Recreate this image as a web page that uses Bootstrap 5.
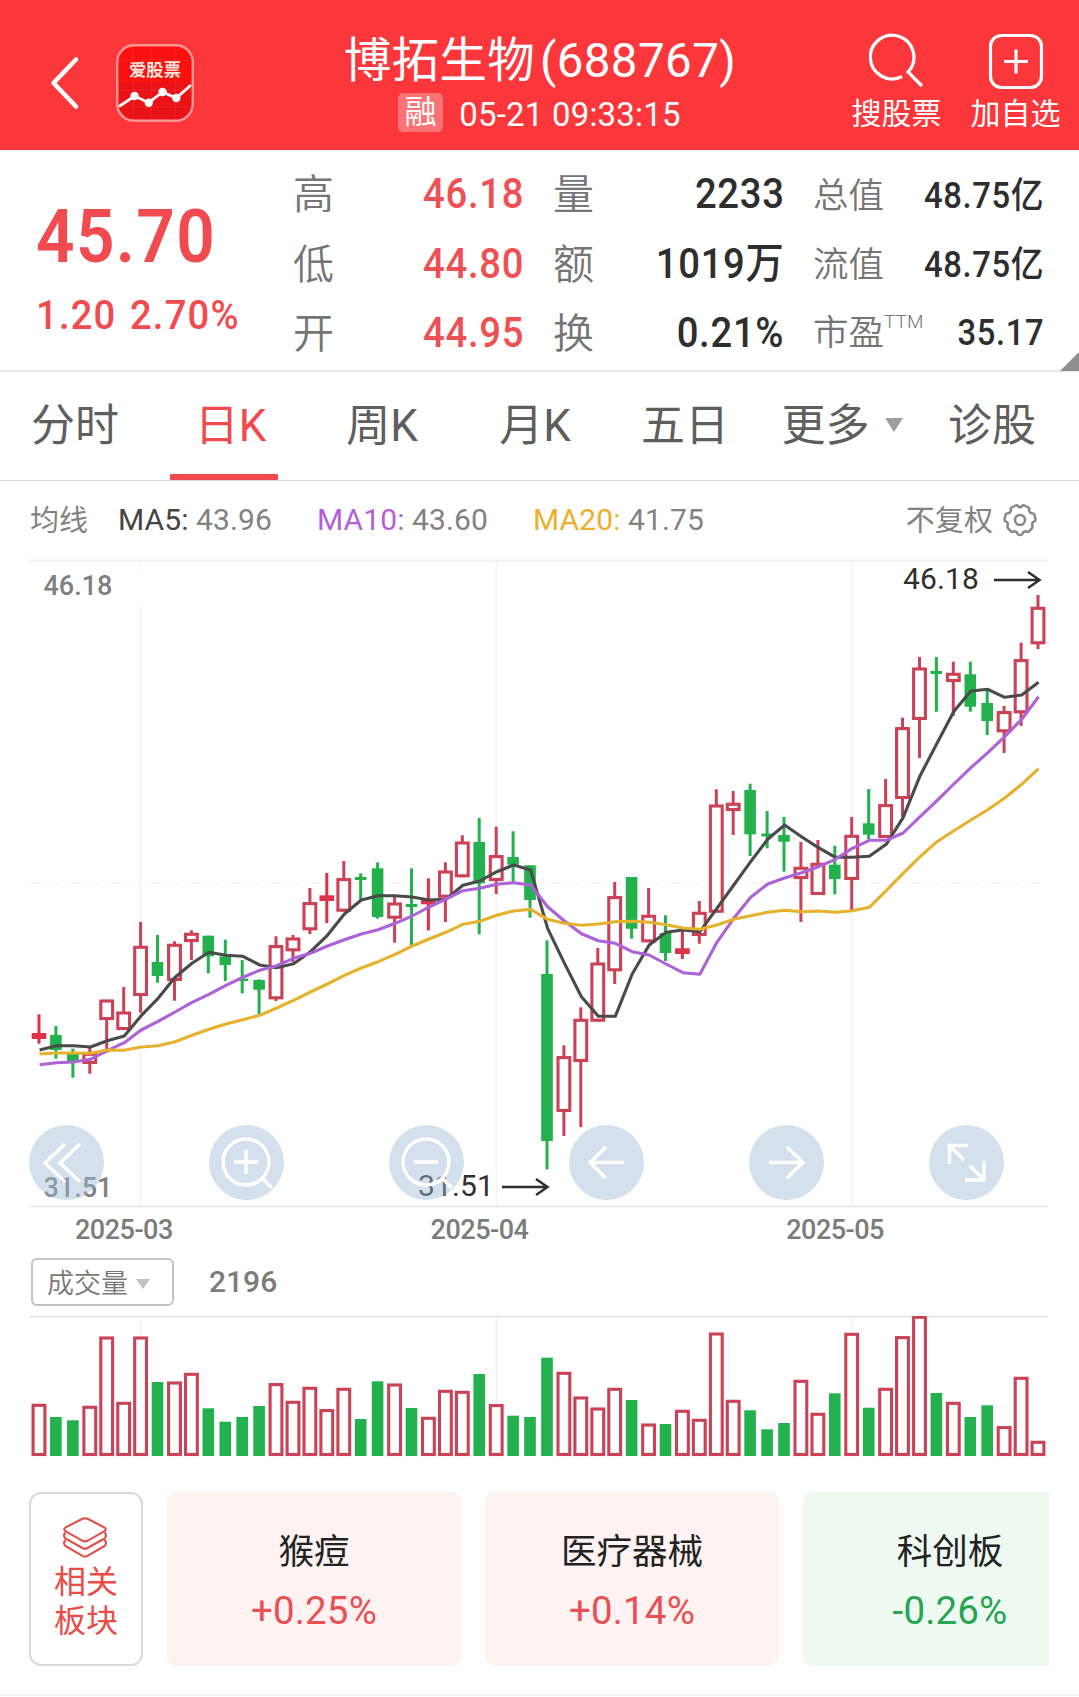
<!DOCTYPE html>
<html lang="zh-CN">
<head>
<meta charset="utf-8">
<meta name="viewport" content="width=device-width, initial-scale=1">
<title>博拓生物(688767)</title>
<link href="https://cdn.jsdelivr.net/npm/bootstrap@5.3.0/dist/css/bootstrap.min.css" rel="stylesheet">
<style>
  body { font-family: Roboto, "Noto Sans CJK SC", sans-serif; color: #2e2e2e; background: #fff; width: 1079px; overflow-x: hidden; }
  svg { display: block; }
  .app-bar { height: 150px; background: #fb373c; color: #fff; }
  .bar-left { width: 330px; padding-left: 49px; }
  .app-logo { margin-left: 36px; margin-top: 15px; }
  .back-icon { margin-top: 15px; }
  .bar-title { width: 420px; }
  .stock-name { font-size: 47.5px; line-height: 60px; margin-top: 31px; letter-spacing: .3px; white-space: nowrap; }
  .stock-code { letter-spacing: .4px; margin-left: 5px; }
  .stock-time { font-size: 33px; line-height: 40px; margin-top: 2px; letter-spacing: .2px; padding-right: 1px; }
  .stock-time > span:last-child { padding-top: 2px; }
  .tag-rong { width: 45px; height: 39px; line-height: 39px; font-size: 32px; text-align: center; border-radius: 5px; background: rgba(255,255,255,.3); margin-right: 16px; }
  .bar-actions { width: 329px; padding-right: 18px; padding-top: 33px; }
  .bar-action { width: 91px; font-size: 30px; line-height: 41px; white-space: nowrap; }
  .bar-action svg { margin: 0 auto 4px; }
  .quote { height: 222px; border-bottom: 2px solid #e9e9e9; }
  .up { color: #f14b4f; }
  .price-block { width: 294px; padding-left: 36px; }
  .price { font-size: 75px; font-weight: 600; line-height: 80px; margin-top: 46px; letter-spacing: 1.5px; transform: scaleX(.9); transform-origin: left; }
  .change { font-size: 41.5px; font-weight: 500; line-height: 50px; margin-top: 14px; letter-spacing: 1.3px; word-spacing: 3px; white-space: nowrap; transform: scaleX(.92); transform-origin: left; }
  .stat-col { width: 229px; padding-top: 9px; }
  .stat-line { height: 69.500px; line-height: 70px; font-size: 41px; white-space: nowrap; }
  .stat-line b { font-weight: 500; font-size: 42px; letter-spacing: .8px; margin-right: -1.3px; transform: scaleX(.91); transform-origin: right; }
  .stat-line span { color: #757575; font-weight: 350; padding-top: 1px; margin-left: -1px; }
  .stat-line b.up { color: #ee5054; }
  .stat-col.narrow .stat-line { height: 68.5px; line-height: 70px; font-size: 35.5px; }
  .stat-col.narrow { padding-top: 11px; width: 228px; }
  .stat-col.narrow span { padding-top: 0; }
  .stat-col.narrow b { font-size: 36px; margin-right: -2px; letter-spacing: .7px; }
  .stat-line sup { font-size: 19px; top: -17px; line-height: 0; font-weight: 300; letter-spacing: .1px; }
  .corner { right: 0; bottom: -1px; border-left: 19px solid transparent; border-bottom: 19px solid #8f8f8f; }
  .period-tabs { height: 109px; border-bottom: 1px solid #d8d8d8; font-size: 44px; color: #5e5e5e; line-height: 108px; }
  .period-tabs > div { text-align: center; white-space: nowrap; }
  .period-tabs .current { color: #f04a4c; }
  .period-tabs .current::after { content: ""; position: absolute; left: 20px; bottom: 0; width: 108px; height: 6px; background: #ef4b4e; border-radius: 1px; }
  .caret { display: inline-block; border-left: 9px solid transparent; border-right: 9px solid transparent; border-top: 14px solid #9f9f9f; }
  .more-tab .caret { margin-left: 15px; margin-bottom: 2px; }
  .ma-row { height: 78px; padding: 0 42px 0 30px; font-size: 30px; color: #828282; line-height: 80px; white-space: nowrap; letter-spacing: .1px; }
  .ma-row .cjk { font-size: 29px; padding-top: 2px; }
  .chart-wrap { height: 650px; }
  .axis-gray { font: 500 27px Roboto, sans-serif; fill: #808080; }
  .peak { font: 400 30px Roboto, sans-serif; fill: #2f2f2f; letter-spacing: .1px; }
  .chart-btns { left: 29px; top: 566px; width: 975px; }
  .round-btn { width: 75px; height: 75px; border-radius: 50%; background: rgba(158,187,213,.44); border: 0; padding: 0; }
  .round-btn svg { fill: none; stroke: #fff; stroke-width: 3.4; }
  .date-row { height: 49px; font-size: 27px; font-weight: 500; color: #7c7c7c; line-height: 43px; padding-left: 75px; letter-spacing: -.5px; }
  .date-row div { width: 355.6px; }
  .date-row div:last-child { width: auto; }
  .date-row div:not(:last-child) { flex-shrink: 0; }
  .vol-row { height: 58px; padding-left: 31px; }
  .vol-select { width: 143px; height: 48px; border: 2px solid #c4c4c4; border-radius: 6px; font-size: 27px; color: #787878; font-weight: 350; line-height: 48px; padding-left: 14px; padding-top: 3px; }
  .vol-select .caret { border-left-width: 7.5px; border-right-width: 7.5px; border-top: 10px solid #c2c2c2; margin-left: 8px; margin-top: 1px; }
  .vol-value { font-size: 30px; font-weight: 500; color: #7c7c7c; line-height: 47px; margin-left: 35px; }
  .sectors { padding-left: 29px; width: 1049px; margin-top: 34px; overflow: hidden; height: 174px; gap: 24px; }
  .sector-head { flex: 0 0 114px; border: 2px solid #dadada; border-radius: 12px; color: #ea4c48; font-size: 32px; line-height: 39px; padding-top: 23px; }
  .sector-head svg { margin: 0 auto 4px; position: relative; left: -1px; }
  .sector { flex: 0 0 294px; border-radius: 10px; background: #fff2f2; text-align: center; padding-top: 35px; }
  .sector.fall { background: #eef9f1; }
  .sector-name { font-size: 35.5px; line-height: 50px; color: #222; }
  .sector-pct { font-size: 38.500px; line-height: 50px; margin-top: 9px; color: #e85054; letter-spacing: .15px; }
  .fall .sector-pct { color: #27a454; }
  .foot-line { margin-top: 29px; height: 1px; background: #f0f0f0; }
</style>
</head>
<body>
<header class="app-bar d-flex">
  <div class="bar-left d-flex align-items-center">
    <svg class="back-icon" width="31" height="56" viewBox="0 0 31 56" fill="none" stroke="#fff" stroke-width="4.5" stroke-linecap="round" stroke-linejoin="round"><path d="M27 4.500L4.500 28L27 51.500"/></svg>
    <svg class="app-logo" width="78" height="78" viewBox="0 0 78 78">
      <rect x="1" y="1" width="76" height="76" rx="17" fill="#f9100f"/>
      <path d="M2 38H76V60Q76 76 60 76H18Q2 76 2 60Z" fill="#e91317"/>
      <path d="M17 2V76M35 2V76M59 2V76M2 16H76M2 46H76M2 63H76" stroke="#ff4545" stroke-opacity=".35"/>
      <rect x="1.200" y="1.200" width="75.600" height="75.600" rx="17" fill="none" stroke="#ff9692" stroke-width="2.400"/>
      <path d="M3 62.500L18.600 52L32.800 58.700L46.500 48L60.300 54L75 41" fill="none" stroke="#fff" stroke-width="2.800"/>
      <g fill="#fff"><circle cx="18.600" cy="52" r="4.200"/><circle cx="32.800" cy="58.700" r="4.200"/><circle cx="46.500" cy="48" r="4.200"/><circle cx="60.300" cy="54" r="4.200"/></g>
      <text x="39" y="32" text-anchor="middle" font-size="17.300" font-weight="700" fill="#ffe4dc" font-family="Noto Sans CJK SC">爱股票</text>
    </svg>
  </div>
  <div class="bar-title">
    <div class="stock-name text-center">博拓生物<span class="stock-code">(688767)</span></div>
    <div class="stock-time d-flex justify-content-center"><span class="tag-rong">融</span><span>05-21 09:33:15</span></div>
  </div>
  <div class="bar-actions d-flex justify-content-end gap-4">
    <div class="bar-action text-center me-1">
      <svg width="56" height="56" viewBox="0 0 56 56" fill="none" stroke="#fff" stroke-width="3.200"><path d="M33 43.500A21.800 21.800 0 1 1 39 39L53 53"/></svg>搜股票</div>
    <div class="bar-action text-center">
      <svg width="56" height="56" viewBox="0 0 56 56" fill="none" stroke="#fff" stroke-width="3.200"><rect x="2.500" y="2.500" width="51" height="52" rx="11"/><path d="M16 28.500H40M28 16.500V40.500"/></svg>加自选</div>
  </div>
</header>

<section class="quote d-flex position-relative">
  <div class="price-block up">
    <div class="price">45.70</div>
    <div class="change">1.20 2.70%</div>
  </div>
  <div class="stat-col">
    <div class="stat-line d-flex justify-content-between"><span>高</span><b class="up">46.18</b></div>
    <div class="stat-line d-flex justify-content-between"><span>低</span><b class="up">44.80</b></div>
    <div class="stat-line d-flex justify-content-between"><span>开</span><b class="up">44.95</b></div>
  </div>
  <div class="stat-col" style="margin-left:31px">
    <div class="stat-line d-flex justify-content-between"><span>量</span><b>2233</b></div>
    <div class="stat-line d-flex justify-content-between"><span>额</span><b>1019万</b></div>
    <div class="stat-line d-flex justify-content-between"><span>换</span><b>0.21%</b></div>
  </div>
  <div class="stat-col narrow" style="margin-left:31px">
    <div class="stat-line d-flex justify-content-between"><span>总值</span><b>48.75亿</b></div>
    <div class="stat-line d-flex justify-content-between"><span>流值</span><b>48.75亿</b></div>
    <div class="stat-line d-flex justify-content-between"><span>市盈<sup>TTM</sup></span><b>35.17</b></div>
  </div>
  <div class="corner position-absolute"></div>
</section>

<nav class="period-tabs d-flex">
  <div style="width:150px">分时</div>
  <div class="current position-relative" style="width:161px">日K</div>
  <div style="width:142px">周K</div>
  <div style="width:164px">月K</div>
  <div style="width:136px">五日</div>
  <div class="more-tab d-flex align-items-center justify-content-center" style="width:178px">更多<i class="caret"></i></div>
  <div style="width:122px">诊股</div>
</nav>

<div class="ma-row d-flex align-items-center">
  <span class="cjk" style="width:88px">均线</span>
  <span style="width:199px"><span style="color:#444">MA5:</span> 43.96</span>
  <span style="width:216px"><span style="color:#b45fd6">MA10:</span> 43.60</span>
  <span><span style="color:#edb02c">MA20:</span> 41.75</span>
  <span class="cjk ms-auto">不复权</span>
  <svg style="margin-left:10px" width="34" height="34" viewBox="0 0 34 34" fill="none" stroke="#888" stroke-width="2.500" stroke-linejoin="round"><path d="M12.500 2.500Q14 1.500 15 3.200Q17 5 19 3.200Q20 1.500 21.500 2.500L25.500 4.500Q26.700 5.500 26 7.200Q26 9.700 29 10.200Q31 10.200 31.500 12L32.500 16.500Q32.500 18 30.800 18.600Q28.500 20 29.400 22.500Q30 24 29 25.200L26 28.500Q24.500 29.200 23 28.400Q20.500 28 19.500 30.600Q19 32 17 32Q15 32 14.500 30.600Q13.500 28 11 28.400Q9.500 29.200 8 28.500L5 25.200Q4 24 4.600 22.500Q5.500 20 3.200 18.600Q1.500 18 1.500 16.500L2.500 12Q3 10.200 5 10.200Q8 9.700 8 7.200Q7.300 5.500 8.500 4.500Z"/><circle cx="17" cy="17" r="5"/></svg>
</div>

<div class="chart-wrap position-relative">
  <svg id="kline" width="1079" height="650" viewBox="0 559 1079 650"></svg>
  <div class="chart-btns position-absolute d-flex justify-content-between">
    <button class="round-btn"><svg width="75" height="75" viewBox="0 0 75 75"><path d="M36 19L16 38L36 57M51 19L31 38L51 57"/></svg></button>
    <button class="round-btn"><svg width="75" height="75" viewBox="0 0 75 75"><circle cx="37" cy="37" r="23"/><path d="M25 37H49M37 25V49M53 53L63 63"/></svg></button>
    <button class="round-btn"><svg width="75" height="75" viewBox="0 0 75 75"><circle cx="37" cy="37" r="23"/><path d="M25 37H49M53 53L63 63"/></svg></button>
    <button class="round-btn"><svg width="75" height="75" viewBox="0 0 75 75"><path d="M55 37.500H21M37 22L21 37.500L37 53"/></svg></button>
    <button class="round-btn"><svg width="75" height="75" viewBox="0 0 75 75"><path d="M20 37.500H54M38 22L54 37.500L38 53"/></svg></button>
    <button class="round-btn"><svg width="75" height="75" viewBox="0 0 75 75"><path d="M39 20.500H20.500V39M20.500 20.500L35 35M55 36V55H36M55 55L41 41"/></svg></button>
  </div>
</div>
<div class="date-row d-flex"><div>2025-03</div><div>2025-04</div><div>2025-05</div></div>
<div class="vol-row d-flex align-items-start">
  <div class="vol-select d-flex align-items-center">成交量<i class="caret"></i></div>
  <div class="vol-value">2196</div>
</div>
<svg id="volume" width="1079" height="142" viewBox="0 1316 1079 142"></svg>

<div class="sectors d-flex">
  <div class="sector-head text-center">
    <svg width="46" height="42" viewBox="0 0 46 42" fill="none" stroke="#e2504c" stroke-width="2.100" stroke-linejoin="round"><path d="M20.500 1.800Q23 .8 25.500 1.800L42.500 10.500Q45 12.300 42.500 14.200L25.500 23.800Q23 25 20.500 23.800L3.500 14.200Q1 12.300 3.500 10.500Z"/><path d="M3.500 15.500Q.5 18.500 3.500 21.500L20.500 31Q23 32.500 25.500 31L42.500 21.500Q45.500 18.500 42.500 15.500M3.500 23Q.5 26 3.500 29L20.500 38.800Q23 40.300 25.500 38.800L42.500 29Q45.500 26 42.500 23"/></svg>
    相关<br>板块
  </div>
  <div class="sector"><div class="sector-name">猴痘</div><div class="sector-pct">+0.25%</div></div>
  <div class="sector"><div class="sector-name">医疗器械</div><div class="sector-pct">+0.14%</div></div>
  <div class="sector fall"><div class="sector-name">科创板</div><div class="sector-pct">-0.26%</div></div>
</div>
<div class="foot-line"></div>

<script>
// Candles: [kind, high, body top, body bottom, low]; r = rise, g = fall, s = solid rise
const candles = [
['s',1014.3,1033,1039,1043.7],['g',1026,1035,1050,1058.7],['g',1048.7,1054,1061.7,1077.7],['r',1047.7,1053,1064,1073.7],['r',999.7,999.7,1020,1052.7],['r',987,1011.7,1030,1030],['r',922,946,996,1012.7],['g',935,962,976,982.7],['r',941.3,944,981,1000.7],['r',930.3,933,942,960],
['g',935.7,935.7,956.3,973.3],['g',939.7,956.3,965,981],['g',960,978.5,981,993.3],['g',979.3,980,989.7,1014],['r',936.3,945.3,999.3,1001],['r',935,937.7,951.3,962],['r',888,902.3,930.3,934],['s',873,895.3,901,923],['r',861,878.3,911.7,911.7],['g',873.3,877,880,900],
['g',862.3,868.3,917,918.7],['r',896.7,902.7,918.7,942.7],['g',868.3,904,907,945],['s',878.3,898.7,904.3,930.3],['r',862.3,870.7,897.7,922],['r',835.3,841.7,877.3,877.3],['g',818,842,883.3,934.3],['r',826.7,855.3,881,894],['g',831.3,857,864.7,882.7],['g',865.3,865.3,900,917.7],
['g',940.3,974,1141,1169.3],['r',1045.3,1056.3,1112,1136],['r',1007.3,1019,1062,1127],['r',948,962.7,1021.7,1021.7],['r',882,896.3,971.3,984],['g',877,877,928.7,938.7],['r',888,915,942.3,942.3],['g',915.3,933,953,961],['s',930,948.3,954,959],['r',901,912,936,943.7],
['r',789.3,804.7,912.7,912.7],['r',791,803,811,835],['g',783.7,790,834.3,856],['g',811,833.5,836.5,848.3],['g',817,835,841.7,871.7],['r',842,867,879,922],['r',840,863,895,895],['g',845.7,864.7,879,894.3],['r',817,835,880,910],['g',789,823.3,834.7,839.3],
['r',779,804.3,838,838],['r',717.7,727.3,799,816.7],['r',657,667.7,720,758],['g',657,671,674,711.7],['r',661.7,673,682,716],['g',661.7,674.3,706.7,711.7],['g',689.3,703,721,735],['r',706,711.3,732.3,753],['r',642.7,659.3,713.3,726],['r',595,607,644.3,649]];
// Moving averages, in thirds of a pixel below y = 780
const averages = {
'#4a4a4a':[810,797,797,801,782,768,707,655,592,550,517,526,529,555,563,551,515,466,402,360,347,347,351,360,358,316,303,275,255,270,445,550,650,709,709,582,495,457,450,455,385,315,245,178,135,170,203,232,232,229,193,113,-13,-110,-206,-267,-272,-248,-255,-293],
'#ad62d8':[854,848,846,838,812,788,750,724,696,667,643,616,592,571,557,535,520,498,479,462,449,430,408,381,357,332,325,313,308,315,380,423,461,482,490,515,525,552,578,583,487,415,352,312,294,278,260,238,205,181,181,159,110,62,12,-37,-82,-130,-182,-250],
'#e6b22d':[822,819,819,820,810,811,801,797,785,766,748,732,719,706,684,661,636,612,586,564,545,523,498,477,457,433,424,406,393,388,418,430,436,432,425,424,427,434,444,448,435,418,407,397,391,395,393,397,392,382,332,280,230,185,152,120,89,54,13,-34]};
// Volume bars: kind and height in thirds of a pixel
const volumes = 'r156 g117 g107 r150 r358 r162 r358 g222 r223 r249 g143 g103 g117 g150 r218 r165 r207 r140 r204 g111 g224 r217 g144 r117 r198 r195 g246 r155 g121 g117 g295 r252 r178 r145 r204 g168 r97 g96 r138 r111 r370 r168 g137 g80 g99 r228 r129 g188 r369 g145 r204 r359 r420 g189 r162 g117 g152 r89 r237 r45'.split(' ');
const RED = '#cb4156', GREEN = '#22b14c';
const cx = i => 39 + i * 16.932;
const rect = (x, y, w, h, a) => `<rect x="${x.toFixed(1)}" y="${y.toFixed(1)}" width="${w}" height="${h.toFixed(1)}" ${a}/>`;
const hollow = (i, t, b) => rect(cx(i) - 5.9, t + 1.3, 11.8, Math.max(b - t - 2.8, 1), `fill="#fff" stroke="${RED}" stroke-width="3.1"`);

let k = '<path d="M30 560.500H1048" stroke="#f0f0f0" stroke-width="2"/><path d="M30 1206.500H1048" stroke="#e4e4e4" stroke-width="1.300"/>'
  + '<path d="M140.500 605V1206M496.500 560V1206M852 560V1206" stroke="#f4f4f4" stroke-width="1.500"/><path d="M140.500 560V570" stroke="#f4f4f4" stroke-width="1.500"/>'
  + '<path d="M30 883.300H1040" stroke="#f4f4f4" stroke-width="1.500" stroke-dasharray="11 9"/>';
candles.forEach(([c, h, t, b, l], i) => {
  const col = c === 'g' ? GREEN : c === 's' ? '#dc3349' : RED;
  k += rect(cx(i) - 1.5, h, 3, l - h, `fill="${col}"`);
  if (c === 'r') k += hollow(i, t, b);
  else { const w = c === 'g' ? 11.6 : 14.6; k += rect(cx(i) - w / 2, t, w, b - t, `fill="${col}"`); }
});
for (const [col, v] of Object.entries(averages))
  k += `<polyline fill="none" stroke="${col}" stroke-width="3.100" stroke-linejoin="round" points="${v.map((y, i) => (cx(i) + .6).toFixed(1) + ',' + (780 + y / 3).toFixed(1)).join(' ')}"/>`;
k += '<text class="axis-gray" x="43.500" y="595">46.18</text><text class="axis-gray" x="43.500" y="1196.500">31.51</text>'
  + '<text class="peak" x="903" y="589">46.18</text><text class="peak" x="418" y="1196">31.51</text>'
  + '<g fill="none" stroke="#2f2f2f" stroke-width="2.500"><path d="M994 580H1039M1028 572L1039.500 580L1028 588"/><path d="M502 1187H547M536 1179L547.500 1187L536 1195"/></g>';
document.getElementById('kline').innerHTML = k;

let v = '<path d="M30 1316.700H1048" stroke="#dedede" stroke-width="1.300"/><path d="M140.500 1318V1456M496.500 1318V1456M852 1318V1456" stroke="#f1f1f1" stroke-width="1.500"/>';
volumes.forEach((s, i) => {
  const h = s.slice(1) / 3;
  v += s[0] === 'r' ? hollow(i, 1456 - h, 1456) : rect(cx(i) - 5.8, 1456 - h, 11.6, h, `fill="${GREEN}"`);
});
document.getElementById('volume').innerHTML = v;
</script>
<script src="https://cdn.jsdelivr.net/npm/bootstrap@5.3.0/dist/js/bootstrap.bundle.min.js"></script>
</body>
</html>
